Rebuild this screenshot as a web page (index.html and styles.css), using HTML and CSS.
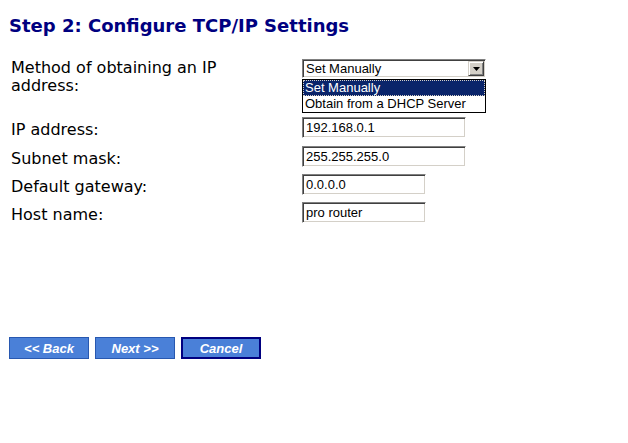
FILE: index.html
```html
<!DOCTYPE html>
<html>
<head>
<meta charset="utf-8">
<link rel="stylesheet" href="styles.css">
</head>
<body>
<div class="page">
  <h1 class="title">Step 2: Configure TCP/IP Settings</h1>
  <div class="form">
    <div class="label label-first">Method of obtaining an IP<br>address:</div>
    <div class="control">
      <div class="select">
        <span class="select-value">Set Manually</span>
        <span class="select-btn"><svg width="7" height="4" viewBox="0 0 7 4"><path d="M0 0H7L3.5 4Z" fill="#000"/></svg></span>
      </div>
      <div class="dropdown">
        <div class="option option-active">Set Manually</div>
        <div class="option">Obtain from a DHCP Server</div>
      </div>
    </div>

    <div class="label">IP address:</div>
    <div class="control"><div class="input input-wide">192.168.0.1</div></div>

    <div class="label">Subnet mask:</div>
    <div class="control"><div class="input input-wide">255.255.255.0</div></div>

    <div class="label">Default gateway:</div>
    <div class="control"><div class="input input-narrow">0.0.0.0</div></div>

    <div class="label">Host name:</div>
    <div class="control"><div class="input input-narrow">pro router</div></div>
  </div>
  <div class="buttons">
    <button class="btn">&lt;&lt; Back</button>
    <button class="btn">Next &gt;&gt;</button>
    <button class="btn btn-default">Cancel</button>
  </div>
</div>
</body>
</html>
```

FILE: styles.css
```css
html, body {
  margin: 0;
  padding: 0;
  background: #ffffff;
}

.page {
  padding: 15px 9px 0 9px;
}

.title {
  margin: 0 0 23px 0;
  font-family: "DejaVu Sans", Verdana, sans-serif;
  font-weight: bold;
  font-size: 18px;
  line-height: 21px;
  color: #000080;
}

.form {
  display: grid;
  grid-template-columns: 291px 1fr;
  grid-template-rows: 58px 29px 28px 28px 28px;
  margin-left: 2px;
  align-items: start;
}

.label {
  font-family: "DejaVu Sans", Verdana, sans-serif;
  font-size: 16px;
  line-height: 18px;
  color: #000;
  padding-top: 4px;
}

.label-first {
  padding-top: 0;
}

.control {
  position: relative;
}

.select {
  box-sizing: border-box;
  width: 184px;
  height: 19px;
  display: flex;
  align-items: center;
  justify-content: space-between;
  background: #fff;
  border-top: 1px solid #808080;
  border-left: 1px solid #808080;
  border-right: 1px solid #ffffff;
  border-bottom: 1px solid #ffffff;
  box-shadow: inset 1px 1px 0 #404040, inset -1px -1px 0 #d4d0c8;
  font-family: "Liberation Sans", Arial, sans-serif;
  font-size: 13px;
  color: #000;
}

.select-value {
  padding-left: 3px;
}

.select-btn {
  box-sizing: border-box;
  width: 16px;
  height: 15px;
  margin-right: 1px;
  display: flex;
  align-items: center;
  justify-content: center;
  background: #d4d0c8;
  border-top: 1px solid #d4d0c8;
  border-left: 1px solid #d4d0c8;
  border-right: 1px solid #404040;
  border-bottom: 1px solid #404040;
  box-shadow: inset 1px 1px 0 #ffffff, inset -1px -1px 0 #808080;
}

.dropdown {
  position: absolute;
  top: 20px;
  left: 0;
  box-sizing: border-box;
  width: 184px;
  border: 1px solid #000;
  background: #fff;
  font-family: "Liberation Sans", Arial, sans-serif;
  font-size: 13px;
  line-height: 16px;
  color: #000;
}

.option {
  height: 16px;
  padding-left: 2px;
  white-space: nowrap;
}

.option-active {
  background: #0a246a;
  color: #fff;
  outline: 1px dotted #d4d0c8;
  outline-offset: -1px;
}

.input {
  box-sizing: border-box;
  height: 21px;
  padding: 2px 0 0 3px;
  background: #fff;
  border-top: 1px solid #808080;
  border-left: 1px solid #808080;
  border-right: 1px solid #ffffff;
  border-bottom: 1px solid #ffffff;
  box-shadow: inset 1px 1px 0 #404040, inset -1px -1px 0 #d4d0c8;
  font-family: "Liberation Sans", Arial, sans-serif;
  font-size: 13px;
  line-height: 15px;
  color: #000;
}

.input-wide {
  width: 164px;
}

.input-narrow {
  width: 124px;
}

.buttons {
  display: flex;
  gap: 6px;
  margin-top: 107px;
}

.btn {
  box-sizing: border-box;
  width: 80px;
  height: 22px;
  padding: 0;
  margin: 0;
  background: #4a80d8;
  border: 1px solid #2858b0;
  color: #ffffff;
  font-family: "Liberation Sans", Arial, sans-serif;
  font-size: 13px;
  font-weight: bold;
  font-style: italic;
  cursor: pointer;
}

.btn-default {
  border: 2px solid #000080;
}
```
